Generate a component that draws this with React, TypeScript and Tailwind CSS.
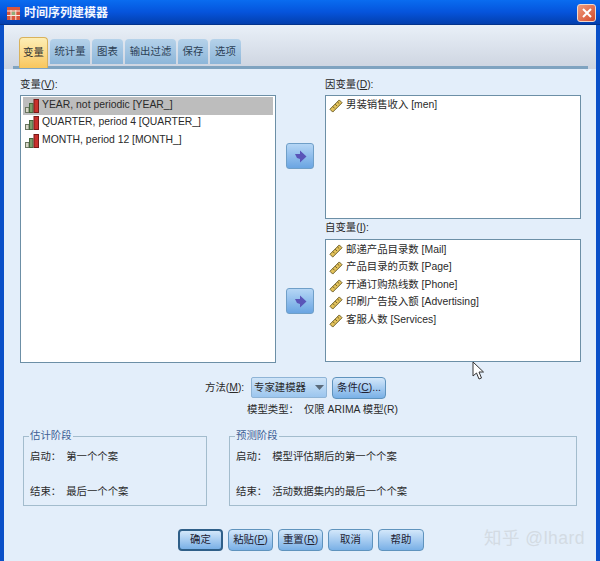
import type { ReactNode } from "react";

const FONT = "font-['Liberation_Sans','Noto_Sans_CJK_SC',sans-serif]";

const BarsIcon = () => (
  <svg width="14" height="14" viewBox="0 0 14 14" className="shrink-0">
    <rect x="0.5" y="8.5" width="3.5" height="5" fill="#d8d8c8" stroke="#6a7560" />
    <rect x="4.5" y="4.5" width="3.5" height="9" fill="#7c9c6c" stroke="#46663c" />
    <rect x="9" y="0.5" width="4.5" height="13" fill="#c9302c" stroke="#7a1a18" />
  </svg>
);

const RulerIcon = () => (
  <svg width="14" height="14" viewBox="0 0 15 15" className="shrink-0">
    <path d="M1 11 L11 1 L14 4 L4 14 Z" fill="#e3c25a" stroke="#6b5a24" strokeWidth="1" />
    <path d="M4 8 L6 10 M6.5 5.5 L8.5 7.5 M9 3 L11 5" stroke="#6b5a24" strokeWidth="1" />
  </svg>
);

const ArrowButton = () => (
  <button className="w-[28px] h-[26px] rounded-[3px] border border-[#6f9fc8] bg-gradient-to-b from-[#b5d6f5] to-[#6aa5e2] flex items-center justify-center">
    <svg width="13" height="13" viewBox="0 0 13 13">
      <path d="M1 4 H6 V0.5 L12.5 6.5 L6 12.5 V9 L3 8 Z" fill="#5a55b8" />
    </svg>
  </button>
);

const Mn = ({ children }: { children: string }) => <span className="underline">{children}</span>;

const Row = ({ icon, children, selected, className }: { icon: ReactNode; children: ReactNode; selected?: boolean; className: string }) => (
  <div className={`h-[17.5px] flex items-center whitespace-nowrap ${selected ? "bg-[#bdbdbd]" : ""} ${className}`}>
    {icon}
    <span className="pb-[2px]">{children}</span>
  </div>
);

const BarRow = ({ children, selected }: { children: ReactNode; selected?: boolean }) => (
  <Row icon={<BarsIcon />} selected={selected} className="pl-[2px] gap-[3px]">{children}</Row>
);

const RulerRow = ({ children }: { children: ReactNode }) => (
  <Row icon={<RulerIcon />} className="pl-[1px] gap-[3px]">{children}</Row>
);

const ListBox = ({ className, children }: { className: string; children?: ReactNode }) => (
  <div className={`border border-[#6c8fa6] bg-white pl-[2px] pr-[2px] ${className}`}>{children}</div>
);

const Tab = ({ label, className }: { label: string; className: string }) => (
  <div className={`h-[25px] mb-[2px] flex items-center justify-center whitespace-nowrap rounded-t-[4px] bg-gradient-to-b from-[#b5d2ea] to-[#8db6d9] text-[#2c3f55] ${className}`}>
    {label}
  </div>
);

const Btn = ({ children, className, primary }: { children: ReactNode; className: string; primary?: boolean }) => (
  <button
    className={`h-[22px] rounded-[4px] border bg-gradient-to-b from-[#d3e7fa] to-[#79b0e6] text-[#223] whitespace-nowrap ${
      primary ? "border-[#2f5f88] border-2" : "border-[#5f93bd]"
    } ${className}`}
  >
    {children}
  </button>
);

const Phase = ({ title, start, end, className }: { title: string; start: string; end: string; className: string }) => (
  <fieldset className={`border border-[#a3bccd] h-[76px] pl-[6px] ${className}`}>
    <legend className="text-[#3f5f95] leading-[12px] ml-[-1px] px-[1px]">{title}</legend>
    <div className="flex gap-[5px] h-[14px] items-center mt-[8px]">
      <span>启动：</span>
      <span>{start}</span>
    </div>
    <div className="flex gap-[5px] h-[14px] items-center mt-[21px]">
      <span>结束：</span>
      <span>{end}</span>
    </div>
  </fieldset>
);

export default function App() {
  return (
    <div className={`${FONT} relative w-[600px] h-[561px] overflow-hidden bg-[#0a50c8] text-[10.4px] text-[#2a2a2a]`}>
      {/* title bar */}
      <div className="h-[25px] pl-[7px] pr-[4px] pt-[2px] flex items-center justify-between bg-gradient-to-b from-[#0a6cf0] via-[#0654dc] to-[#033fae] border-b border-[#03338c]">
        <div className="flex items-center gap-[4px]">
          <svg width="13" height="13" viewBox="0 0 13 13">
            <rect width="13" height="13" fill="#d9553c" />
            <rect x="4.5" y="4.5" width="4" height="4" fill="#8fae78" />
            <path d="M0 4 H13 M0 8.5 H13 M4 3 V13 M8.8 3 V13" stroke="#f8e8dc" strokeWidth="1" />
          </svg>
          <span className="text-[12px] font-bold text-[#f2f6ff]">时间序列建模器</span>
        </div>
        <div className="w-[19px] h-[18px] rounded-[3px] border border-[#f0d8cc] bg-gradient-to-br from-[#ee9a7c] to-[#d4492a] flex items-center justify-center">
          <svg width="12" height="12" viewBox="0 0 12 12">
            <path d="M2 2 L10 10 M10 2 L2 10" stroke="#fff" strokeWidth="2" />
          </svg>
        </div>
      </div>

      {/* dialog body */}
      <div className="mx-[4px] h-[536px] bg-[#e3eefa]">
        <div className="h-[44px] bg-gradient-to-b from-[#e9f0f8] to-[#cdd4e0] flex flex-col justify-end">
          <div className="flex items-end gap-[2px] pl-[15px]">
            <div className="relative w-[29px] h-[31px] mb-[-2px] flex items-center justify-center rounded-t-[4px] bg-gradient-to-b from-[#fdeeb5] to-[#f8c65c] border border-[#d9b25c] border-b-0 text-[#333]">
              变量
            </div>
            <Tab label="统计量" className="w-[40px]" />
            <Tab label="图表" className="w-[31px]" />
            <Tab label="输出过滤" className="w-[51px]" />
            <Tab label="保存" className="w-[30px]" />
            <Tab label="选项" className="w-[31px]" />
          </div>
          <div className="h-[3px] w-[575px] bg-[#7fa3c0] ml-[9px] shrink-0" />
        </div>

        <div className="flex pl-[16px] pt-[9px]">
          <div className="w-[256px]">
            <div className="h-[17px] pb-[4px] flex items-center">变量(<Mn>V</Mn>):</div>
            <ListBox className="h-[268px] pt-[1px]">
              <BarRow selected>YEAR, not periodic [YEAR_]</BarRow>
              <BarRow>QUARTER, period 4 [QUARTER_]</BarRow>
              <BarRow>MONTH, period 12 [MONTH_]</BarRow>
            </ListBox>
          </div>
          <div className="w-[49px] pl-[10px] pt-[65px]">
            <ArrowButton />
            <div className="h-[119px]" />
            <ArrowButton />
          </div>
          <div className="w-[256px]">
            <div className="h-[17px] pb-[4px] flex items-center">因变量(<Mn>D</Mn>):</div>
            <ListBox className="h-[124px] pt-[1px]">
              <RulerRow>男装销售收入 [men]</RulerRow>
            </ListBox>
            <div className="h-[20px] pb-[2px] flex items-center">自变量(<Mn>I</Mn>):</div>
            <ListBox className="h-[123px] pt-[2px]">
              <RulerRow>邮递产品目录数 [Mail]</RulerRow>
              <RulerRow>产品目录的页数 [Page]</RulerRow>
              <RulerRow>开通订购热线数 [Phone]</RulerRow>
              <RulerRow>印刷广告投入额 [Advertising]</RulerRow>
              <RulerRow>客服人数 [Services]</RulerRow>
            </ListBox>
          </div>
        </div>

        <div className="flex items-center pl-[201px] mt-[14px] h-[21px]">
          <span className="w-[46px] whitespace-nowrap">方法(<Mn>M</Mn>):</span>
          <div className="w-[76px] h-[21px] rounded-[2px] border border-[#8fb4d6] bg-gradient-to-b from-[#cfe4f8] to-[#9cc6ee] flex items-center pl-[2px] gap-[9px]">
            <span className="whitespace-nowrap">专家建模器</span>
            <svg width="9" height="5" viewBox="0 0 9 5"><path d="M0 0 H9 L4.5 5 Z" fill="#5a6a7a" /></svg>
          </div>
          <Btn className="w-[54px] ml-[5px] mt-[1px]">条件(<Mn>C</Mn>)...</Btn>
        </div>
        <div className="h-[14px] mt-[5px] pl-[243px] flex items-center gap-[5px] whitespace-nowrap">
          <span>模型类型：</span>
          <span>仅限 ARIMA 模型(R)</span>
        </div>

        <div className="flex gap-[22px] pl-[19px] mt-[13px]">
          <Phase title="估计阶段" start="第一个个案" end="最后一个个案" className="w-[184px]" />
          <Phase title="预测阶段" start="模型评估期后的第一个个案" end="活动数据集内的最后一个个案" className="w-[348px]" />
        </div>

        <div className="flex gap-[5px] pl-[174px] mt-[23px]">
          <Btn primary className="w-[45px]">确定</Btn>
          <Btn className="w-[45px]">粘贴(<Mn>P</Mn>)</Btn>
          <Btn className="w-[45px]">重置(<Mn>R</Mn>)</Btn>
          <Btn className="w-[45px]">取消</Btn>
          <Btn className="w-[46px]">帮助</Btn>
        </div>
      </div>

      {/* mouse cursor, sits over the list */}
      <svg width="13" height="19" viewBox="0 0 13 19" className="absolute left-[472px] top-[361px]">
        <path d="M1 1 V15 L4.5 12 L7 18 L9.5 17 L7 11 H11.5 Z" fill="#fff" stroke="#333" strokeWidth="1" />
      </svg>

      {/* watermark */}
      <div className="absolute left-[484px] top-[525px] text-[17.5px] text-[#d3dbe3] tracking-[0.5px] whitespace-nowrap">知乎 @lhard</div>
    </div>
  );
}
